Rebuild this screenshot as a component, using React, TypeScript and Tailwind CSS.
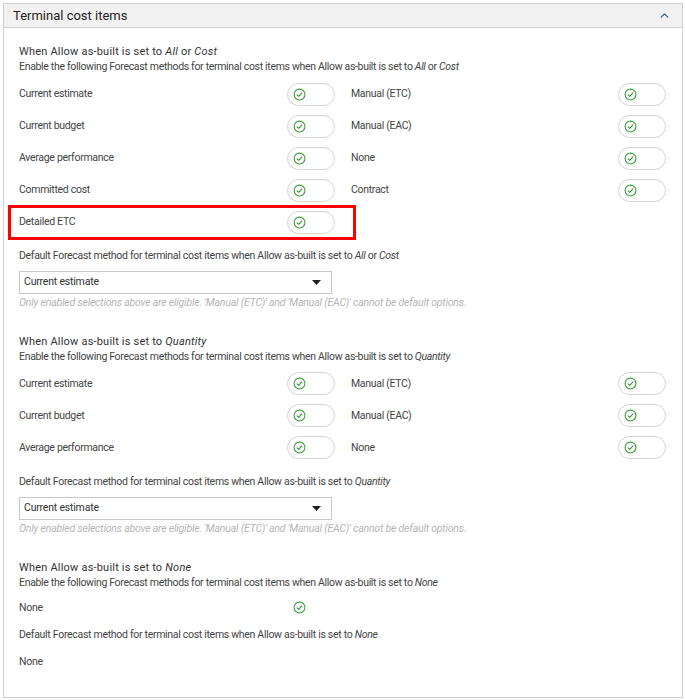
import { ChevronUp } from 'lucide-react';

const font = { fontFamily: 'Roboto, "Liberation Sans", sans-serif' };

function CheckIcon() {
  return (
    <svg width="13" height="13" viewBox="0 0 24 24" fill="none" stroke="#3a9d3a" strokeWidth="2" strokeLinecap="round" strokeLinejoin="round">
      <circle cx="12" cy="12" r="10" />
      <path d="M7.5 12.5l3 3 6-6.5" />
    </svg>
  );
}

function Toggle() {
  return (
    <div className="flex h-[23px] w-[48px] items-center rounded-full border border-[#d4d4d4] bg-white pl-[5px]">
      <CheckIcon />
    </div>
  );
}

function Label({ children }: { children: React.ReactNode }) {
  return <div className="text-[10.5px] tracking-[-0.3px] text-[#444]">{children}</div>;
}

function SectionTitle({ value }: { value: React.ReactNode }) {
  return (
    <div className="leading-[15px]">
      <div className="text-[11px] tracking-[0.2px] text-[#333]">When Allow as-built is set to {value}</div>
      <div className="text-[10.5px] tracking-[-0.32px] text-[#444]">
        Enable the following Forecast methods for terminal cost items when Allow as-built is set to {value}
      </div>
    </div>
  );
}

function Rows({ rows, highlight }: { rows: [string, string | null][]; highlight?: number }) {
  return (
    <div className="mt-[4px] flex flex-col">
      {rows.map(([l, r], i) => (
        <div key={i} className="relative grid h-[32px] grid-cols-[268px_48px_16px_267px_48px] items-center">
          <Label>{l}</Label>
          <Toggle />
          <div />
          {r ? <Label>{r}</Label> : <div />}
          {r ? <Toggle /> : <div />}
          {highlight === i && (
            <div className="absolute left-[-11px] top-[-1px] h-[35px] w-[348px] border-[3px] border-[#ff0000]" />
          )}
        </div>
      ))}
    </div>
  );
}

function DefaultSelect({ value }: { value: React.ReactNode }) {
  return (
    <div>
      <div className="mt-[10px] text-[10.5px] tracking-[-0.3px] text-[#444]">
        Default Forecast method for terminal cost items when Allow as-built is set to {value}
      </div>
      <div className="mt-[7px] flex h-[23px] w-[313px] items-center justify-between border border-[#c8c8c8] bg-white pl-[4px] pr-[10px]">
        <span className="text-[10.5px] tracking-[-0.2px] text-[#333]">Current estimate</span>
        <svg width="9" height="5" viewBox="0 0 9 5"><path d="M0 0h9L4.5 5z" fill="#222" /></svg>
      </div>
      <div className="mt-[2px] text-[10.5px] leading-[14px] italic tracking-[-0.2px] text-[#b5b5b5]">
        Only enabled selections above are eligible. 'Manual (ETC)' and 'Manual (EAC)' cannot be default options.
      </div>
    </div>
  );
}

export default function App() {
  return (
    <div className="h-[700px] w-[685px] bg-white pl-[3px] pt-[3px]" style={font}>
      <div className="h-[695px] w-[680px] border border-[#cfcfcf]">
        <div className="flex h-[24px] items-center justify-between border-b border-[#cfcfcf] bg-[#f1f1f1] pl-[9px] pr-[11px]">
          <span className="text-[13px] text-[#222]">Terminal cost items</span>
          <ChevronUp size={13} strokeWidth={2.5} color="#3f5f85" />
        </div>
        <div className="pl-[15px] pt-[16px]">
          <SectionTitle value={<><i>All</i> or <i>Cost</i></>} />
          <Rows
            rows={[
              ['Current estimate', 'Manual (ETC)'],
              ['Current budget', 'Manual (EAC)'],
              ['Average performance', 'None'],
              ['Committed cost', 'Contract'],
              ['Detailed ETC', null],
            ]}
            highlight={4}
          />
          <DefaultSelect value={<><i>All</i> or <i>Cost</i></>} />

          <div className="mt-[24px]">
            <SectionTitle value={<i>Quantity</i>} />
          </div>
          <Rows
            rows={[
              ['Current estimate', 'Manual (ETC)'],
              ['Current budget', 'Manual (EAC)'],
              ['Average performance', 'None'],
            ]}
          />
          <DefaultSelect value={<i>Quantity</i>} />

          <div className="mt-[24px]">
            <SectionTitle value={<i>None</i>} />
          </div>
          <div className="mt-[8px] grid h-[20px] grid-cols-[274px_20px] items-center">
            <Label>None</Label>
            <CheckIcon />
          </div>
          <div className="mt-[9px]">
            <Label>
              Default Forecast method for terminal cost items when Allow as-built is set to <i>None</i>
            </Label>
          </div>
          <div className="mt-[12px]">
            <Label>None</Label>
          </div>
        </div>
      </div>
    </div>
  );
}
